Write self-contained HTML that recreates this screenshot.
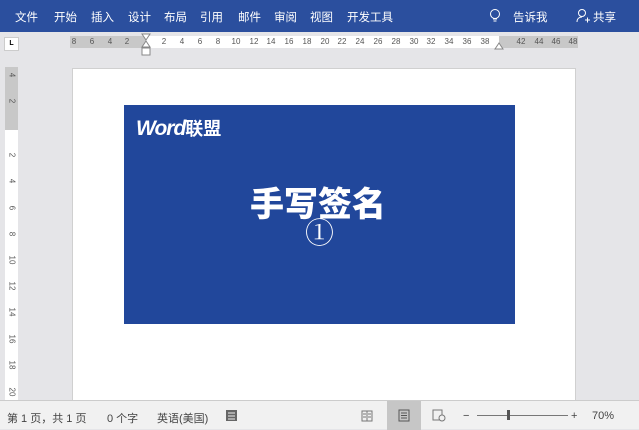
<!DOCTYPE html><html><head><meta charset="utf-8"><style>
*{margin:0;padding:0;box-sizing:border-box}
body{width:639px;height:429px;overflow:hidden;background:#e5e5e8;font-family:"Liberation Sans","Noto Sans CJK SC",sans-serif;position:relative}
.top{position:absolute;left:0;top:0;width:639px;height:32px;background:#2b4f9e}
.m{position:absolute;top:9px;color:#fff;font-size:11.5px;white-space:nowrap}
.rul{position:absolute;background:#fff}
.n{position:absolute;font-size:8px;color:#555;transform:translateX(-50%)}
.v{position:absolute;font-size:8px;color:#555;transform:translate(-50%,-50%) rotate(90deg)}
.st{position:absolute;top:400px;left:0;width:639px;height:29px;background:#f1f1f1;border-top:1px solid #ccc}
.s{position:absolute;top:9px;font-size:11px;color:#444;white-space:nowrap}
</style></head><body>
<div class="top">
<span class="m" style="left:15px">文件</span><span class="m" style="left:54px">开始</span><span class="m" style="left:91px">插入</span><span class="m" style="left:128px">设计</span><span class="m" style="left:164px">布局</span><span class="m" style="left:200px">引用</span><span class="m" style="left:238px">邮件</span><span class="m" style="left:274px">审阅</span><span class="m" style="left:310px">视图</span><span class="m" style="left:347px">开发工具</span>
<svg style="position:absolute;left:489px;top:8px" width="12" height="16"><circle cx="6" cy="6" r="4.5" fill="none" stroke="#fff"/><path d="M4 11h4M4.5 13h3" stroke="#fff"/></svg>
<span class="m" style="left:513px">告诉我</span>
<svg style="position:absolute;left:576px;top:8px" width="14" height="16"><circle cx="6" cy="5" r="3.5" fill="none" stroke="#fff"/><path d="M1 14c0-4 3-5 5-5M9 12h5M11.5 9.5v5" stroke="#fff" fill="none"/></svg>
<span class="m" style="left:593px">共享</span>
</div>
<div style="position:absolute;left:4px;top:37px;width:15px;height:14px;background:#fff;border:1px solid #ccc;font-size:7px;text-align:center;line-height:12px;font-weight:bold">L</div>
<div class="rul" style="left:70px;top:36px;width:508px;height:12px;background:#c8c8c8"></div>
<div class="rul" style="left:146px;top:36px;width:353px;height:12px"></div>
<div class="n" style="left:74px;top:37px">8</div><div class="n" style="left:92px;top:37px">6</div><div class="n" style="left:110px;top:37px">4</div><div class="n" style="left:127px;top:37px">2</div>
<div class="n" style="left:164px;top:37px">2</div><div class="n" style="left:182px;top:37px">4</div><div class="n" style="left:200px;top:37px">6</div><div class="n" style="left:218px;top:37px">8</div><div class="n" style="left:236px;top:37px">10</div><div class="n" style="left:254px;top:37px">12</div><div class="n" style="left:271px;top:37px">14</div><div class="n" style="left:289px;top:37px">16</div><div class="n" style="left:307px;top:37px">18</div><div class="n" style="left:325px;top:37px">20</div><div class="n" style="left:342px;top:37px">22</div><div class="n" style="left:360px;top:37px">24</div><div class="n" style="left:378px;top:37px">26</div><div class="n" style="left:396px;top:37px">28</div><div class="n" style="left:414px;top:37px">30</div><div class="n" style="left:431px;top:37px">32</div><div class="n" style="left:449px;top:37px">34</div><div class="n" style="left:467px;top:37px">36</div><div class="n" style="left:485px;top:37px">38</div><div class="n" style="left:521px;top:37px">42</div><div class="n" style="left:539px;top:37px">44</div><div class="n" style="left:556px;top:37px">46</div><div class="n" style="left:573px;top:37px">48</div>
<svg style="position:absolute;left:141px;top:33px" width="10" height="24"><path d="M1 1h8L5 7zM5 8L1 14h8zM1 15h8v7H1z" fill="#fff" stroke="#888"/></svg>
<svg style="position:absolute;left:494px;top:42px" width="10" height="8"><path d="M1 7h8L5 1z" fill="#fff" stroke="#888"/></svg>
<div class="rul" style="left:5px;top:67px;width:13px;height:333px"></div>
<div class="rul" style="left:5px;top:67px;width:13px;height:63px;background:#c8c8c8"></div>
<div class="v" style="left:12px;top:75px">4</div><div class="v" style="left:12px;top:101px">2</div><div class="v" style="left:12px;top:155px">2</div><div class="v" style="left:12px;top:181px">4</div><div class="v" style="left:12px;top:208px">6</div><div class="v" style="left:12px;top:234px">8</div><div class="v" style="left:12px;top:260px">10</div><div class="v" style="left:12px;top:286px">12</div><div class="v" style="left:12px;top:312px">14</div><div class="v" style="left:12px;top:339px">16</div><div class="v" style="left:12px;top:365px">18</div><div class="v" style="left:12px;top:392px">20</div>
<div style="position:absolute;left:72px;top:68px;width:504px;height:340px;background:#fff;border:1px solid #d0d0d0"></div>
<div style="position:absolute;left:124px;top:105px;width:391px;height:219px;background:#21479b;color:#fff">
<div style="position:absolute;left:12px;top:10px;font-size:21px;font-weight:bold;font-style:italic;letter-spacing:-1px">Word<span style="font-style:normal;font-size:18px;letter-spacing:0">联盟</span></div>
<div style="position:absolute;left:126px;top:72px;font-size:34px;font-weight:900;letter-spacing:0">手写签名</div>
<div style="position:absolute;left:181px;top:106px;font-size:29px;font-family:'Liberation Serif','Noto Serif CJK SC',serif">①</div>
</div>
<div class="st">
<span class="s" style="left:7px">第 1 页，共 1 页</span><span class="s" style="left:107px">0 个字</span><span class="s" style="left:157px">英语(美国)</span>
<svg style="position:absolute;left:226px;top:9px" width="11" height="11"><rect x="0" y="0" width="11" height="11" fill="#666"/><path d="M2 3h7M2 6h7M2 9h7" stroke="#eee"/></svg>
<svg style="position:absolute;left:361px;top:9px" width="12" height="12"><rect x="1" y="1" width="10" height="10" fill="none" stroke="#777"/><path d="M6 1v10M2 4h3M2 7h3M7 4h3M7 7h3" stroke="#777"/></svg>
<div style="position:absolute;left:387px;top:0;width:34px;height:29px;background:#c6c6c6"></div>
<svg style="position:absolute;left:398px;top:8px" width="12" height="13"><rect x="1" y="1" width="10" height="11" fill="none" stroke="#555"/><path d="M3 4h6M3 6.5h6M3 9h6" stroke="#555"/></svg>
<svg style="position:absolute;left:432px;top:8px" width="14" height="13"><rect x="1" y="1" width="9" height="10" fill="none" stroke="#777"/><circle cx="10" cy="9" r="3" fill="#f1f1f1" stroke="#777"/></svg>
<span class="s" style="left:463px">−</span>
<div style="position:absolute;left:477px;top:14px;width:91px;height:1px;background:#777"></div>
<div style="position:absolute;left:507px;top:9px;width:3px;height:10px;background:#555"></div>
<span class="s" style="left:571px">+</span><span class="s" style="left:592px">70%</span>
</div>
</body></html>
